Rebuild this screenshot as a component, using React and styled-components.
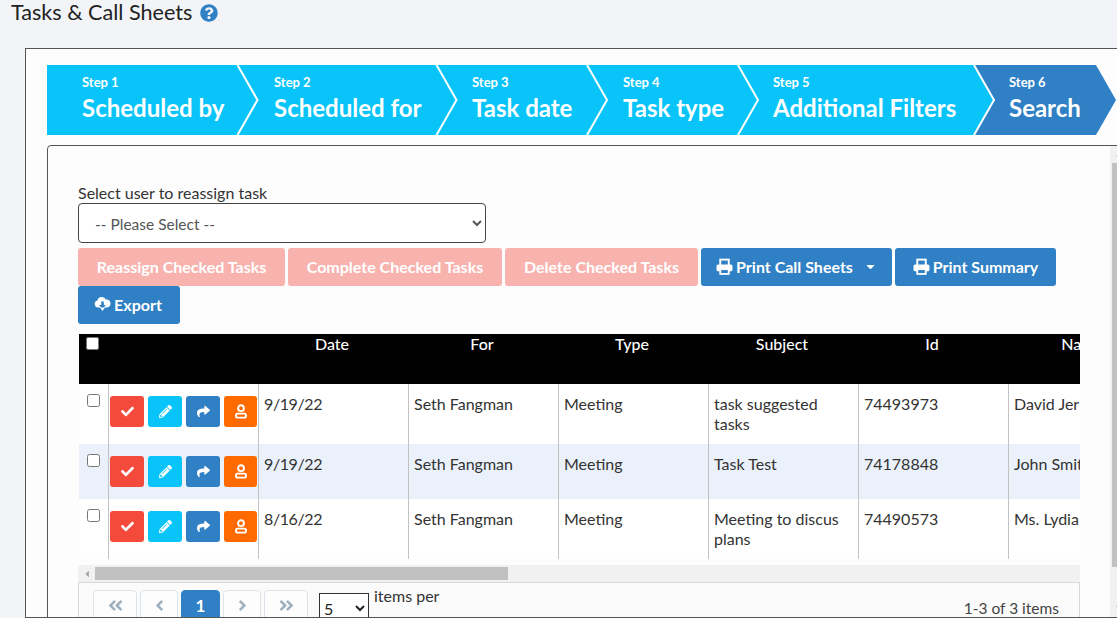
import React from "react";
import styled, { createGlobalStyle } from "styled-components";
import {
  FaCheck,
  FaPencilAlt,
  FaShare,
  FaQuestionCircle,
  FaAngleDoubleLeft,
  FaAngleDoubleRight,
  FaAngleLeft,
  FaAngleRight,
  FaCaretDown,
  FaCaretUp,
  FaCaretLeft,
} from "react-icons/fa";

const GlobalStyle = createGlobalStyle`
  * { box-sizing: border-box; }
  html, body { margin: 0; padding: 0; height: 618px; overflow: hidden; background: #f3f4f8; }
  body { font-family: Lato, "Open Sans", sans-serif; font-size: 16px; color: #333; }
`;

const Page = styled.div`
  width: 1117px;
  height: 618px;
  overflow: hidden;
  display: flex;
  flex-direction: column;
`;

const TitleBar = styled.h1`
  margin: 0;
  height: 48px;
  padding: 0 0 0 11px;
  display: flex;
  align-items: flex-start;
  gap: 8px;
  font-size: 21.6px;
  line-height: 25px;
  font-weight: 400;
  color: #222;
  svg {
    color: #2f80c4;
    font-size: 18px;
    margin-top: 4px;
  }
`;

const OuterBox = styled.div`
  flex: 0 0 570px;
  width: 1200px;
  margin-left: 25px;
  padding: 16px 0 0 21px;
  background: #fdfdfd;
  border: 1px solid #555;
  overflow: hidden;
`;

const Stepper = styled.div`
  display: flex;
  height: 70px;
  margin-bottom: 10px;
`;

const Step = styled.div`
  position: relative;
  flex: 0 0 ${(p) => p.$w}px;
  height: 70px;
  padding-left: ${(p) => p.$pad}px;
  color: #fff;
  z-index: ${(p) => p.$z};
`;

const StepShape = styled.svg`
  position: absolute;
  left: 0;
  top: 0;
  height: 70px;
`;

const StepNo = styled.div`
  position: relative;
  padding-top: 9px;
  font-size: 13px;
  line-height: 17px;
  font-weight: 700;
`;

const StepName = styled.div`
  position: relative;
  margin-top: 1px;
  font-size: 24px;
  line-height: 32px;
  font-weight: 700;
  white-space: nowrap;
`;

const Panel = styled.div`
  display: flex;
  width: 1080px;
  height: 480px;
  background: #fdfdfd;
  border: 1px solid #555;
  border-radius: 4px 0 0 0;
`;

const PanelBody = styled.div`
  flex: 0 0 1062px;
  padding: 37px 30px 0;
  overflow: hidden;
`;

const FieldLabel = styled.label`
  display: block;
  font-size: 16px;
  line-height: 20px;
  color: #333;
`;

const UserSelect = styled.select`
  display: block;
  width: 408px;
  height: 40px;
  padding: 2px 12px 0;
  font: 15.5px Lato, sans-serif;
  color: #555;
  background: #fff;
  border: 1px solid #444;
  border-radius: 4px;
`;

const Toolbar = styled.div`
  display: flex;
  flex-wrap: wrap;
  column-gap: 3px;
  margin-top: 5px;
`;

const ActionButton = styled.button`
  width: ${(p) => p.$w}px;
  height: 38px;
  padding: 0 0 2px;
  display: flex;
  align-items: center;
  justify-content: center;
  gap: 3px;
  font: 700 16px Lato, sans-serif;
  color: #fff;
  background: ${(p) => (p.$off ? "#f8b3af" : "#2f80c4")};
  border: none;
  border-radius: 3px;
`;

const ExportButton = styled(ActionButton)`
  padding-right: 2px;
`;

const Caret = styled(FaCaretDown)`
  margin-left: 8px;
  font-size: 13px;
`;

const TableWrap = styled.div`
  width: 1002px;
  margin-top: 10px;
  overflow: hidden;
`;

const Grid = styled.table`
  width: 1230px;
  table-layout: fixed;
  border-collapse: collapse;
  font-size: 16px;
`;

const HeadRow = styled.tr`
  height: 50px;
  background: #000;
`;

const HeadCell = styled.th`
  vertical-align: top;
  padding: 0 8px 0 5px;
  font-weight: 500;
  line-height: 20px;
  text-align: center;
  color: #fff;
`;

const Row = styled.tr`
  height: ${(p) => p.$h}px;
  background: ${(p) => (p.$alt ? "#eaf1fa" : "#fff")};
`;

const Cell = styled.td`
  vertical-align: top;
  padding: 10px 5px 0;
  line-height: 20px;
  color: #333;
  border-left: 1px solid #c2c2c2;
`;

const DateCell = styled(Cell)`
  letter-spacing: -0.4px;
`;

const CheckCell = styled(Cell)`
  padding: 10px 0 0 8px;
  border-left: 1px solid #fdfdfd;
`;

const ButtonCell = styled(Cell)`
  padding: 12px 0 0 1px;
`;

const Check = styled.input.attrs({ type: "checkbox" })`
  display: block;
  width: 13px;
  height: 13px;
  margin: 0;
`;

const HeadCheck = styled(Check)`
  margin: 3px 0 0 2px;
`;

const RowButtons = styled.div`
  display: flex;
  gap: 4px;
`;

const RowButton = styled.span`
  flex: 0 0 ${(p) => p.$w || 34}px;
  height: 31px;
  display: flex;
  align-items: center;
  justify-content: center;
  color: #fff;
  font-size: 13px;
  background: ${(p) => p.$bg};
  border-radius: 3px;
`;

const HScroll = styled.div`
  display: flex;
  align-items: center;
  width: 1002px;
  height: 17px;
  margin-top: 6px;
  background: #f1f1f1;
  color: #a3a3a3;
  font-size: 10px;
`;

const HArrow = styled.span`
  flex: 0 0 17px;
  display: flex;
  justify-content: center;
`;

const HThumb = styled.span`
  flex: 0 0 413px;
  height: 13px;
  background: #c1c1c1;
`;

const Pager = styled.div`
  display: flex;
  width: 1002px;
  height: 60px;
  padding: 7px 20px 0 14px;
  background: #fbfbfb;
  border: 1px solid #d8d8d8;
`;

const PageLinks = styled.div`
  display: flex;
  gap: 3px;
`;

const PageLink = styled.span`
  flex: 0 0 ${(p) => p.$w}px;
  height: 40px;
  display: flex;
  align-items: center;
  justify-content: center;
  padding-bottom: 10px;
  font-size: 17px;
  font-weight: 700;
  color: ${(p) => (p.$on ? "#fff" : "#9fb0bf")};
  background: ${(p) => (p.$on ? "#2f80c4" : "#fdfdfd")};
  border: 1px solid ${(p) => (p.$on ? "#2f80c4" : "#dde3ea")};
  border-radius: 4px;
`;

const PageSize = styled.select`
  width: 50px;
  height: 30px;
  margin: 3px 0 0 11px;
  padding: 0;
  font: 16px Lato, sans-serif;
  color: #222;
  background: #fff;
  border: 1px solid #333;
  border-radius: 0;
`;

const PerPage = styled.span`
  margin: -2px 0 0 5px;
  font-size: 16px;
  line-height: 15px;
  color: #333;
`;

const PageInfo = styled.span`
  margin-left: auto;
  margin-top: 9px;
  font-size: 15.5px;
  line-height: 18px;
  color: #444;
`;

const VScroll = styled.div`
  flex: 0 0 17px;
  display: flex;
  flex-direction: column;
  align-items: center;
  background: #f1f1f1;
  color: #a3a3a3;
  font-size: 10px;
`;

const VArrow = styled.span`
  flex: 0 0 17px;
  display: flex;
  align-items: center;
`;

const VThumb = styled.span`
  flex: 0 0 404px;
  width: 13px;
  background: #c1c1c1;
`;

const VSpacer = styled.span`
  flex: 0 0 31px;
`;

const steps = [
  { no: "Step 1", name: "Scheduled by", w: 190.5, pad: 35 },
  { no: "Step 2", name: "Scheduled for", w: 198.5, pad: 36.5 },
  { no: "Step 3", name: "Task date", w: 151, pad: 36 },
  { no: "Step 4", name: "Task type", w: 151, pad: 36 },
  { no: "Step 5", name: "Additional Filters", w: 236, pad: 35 },
  { no: "Step 6", name: "Search", w: 122, pad: 35, last: true },
];

const heads = ["Date", "For", "Type", "Subject", "Id", "Name"];

const rows = [
  { h: 60, date: "9/19/22", type: "Meeting", subject: "task suggested tasks", id: "74493973", name: "David Jer" },
  { h: 55, date: "9/19/22", type: "Meeting", subject: "Task Test", id: "74178848", name: "John Smith", alt: true },
  { h: 60, date: "8/16/22", type: "Meeting", subject: "Meeting to discus plans", id: "74490573", name: "Ms. Lydia" },
];

const StepBg = ({ w, last }) => {
  const shape = `M0 0H${w}L${w + 20} 35L${w} 70H0Z`;
  return (
    <StepShape width={w + 22} viewBox={`0 0 ${w + 22} 70`}>
      <path d={shape} fill={last ? "#2f80c4" : "#08c4f8"} />
      {!last && (
        <path d={`M${w} 0L${w + 20} 35L${w} 70`} fill="none" stroke="#fff" strokeWidth="2" />
      )}
    </StepShape>
  );
};

const PrintIcon = () => (
  <svg width="17" height="17" viewBox="0 0 16 16">
    <rect x="4" y="1.5" width="8" height="6" fill="none" stroke="#fff" strokeWidth="1.8" />
    <rect x="0.5" y="6" width="15" height="6.5" rx="1.5" fill="#fff" />
    <rect x="4" y="10.5" width="8" height="4.5" fill="#2f80c4" stroke="#fff" strokeWidth="1.7" />
  </svg>
);

const ExportIcon = () => (
  <svg width="17" height="16" viewBox="0 0 17 16">
    <path d="M4 11.5A3.5 3.5 0 0 1 3.4 4.6 4.6 4.6 0 0 1 12 3.6 3.9 3.9 0 0 1 13 11.5Z" fill="#fff" />
    <path d="M7.2 5.5H9.8V9H12L8.5 12.5 5 9H7.2Z" fill="#2f80c4" />
    <path d="M6 11.5H11L8.5 15Z" fill="#fff" />
  </svg>
);

const UserIcon = () => (
  <svg width="14" height="15" viewBox="0 0 14 15">
    <circle cx="7" cy="4.2" r="2.9" fill="none" stroke="#fff" strokeWidth="1.9" />
    <rect x="2" y="9.6" width="10" height="4" rx="1.6" fill="none" stroke="#fff" strokeWidth="1.9" />
  </svg>
);

const App = () => {
  return (
    <Page>
      <GlobalStyle />
      <TitleBar>
        Tasks &amp; Call Sheets <FaQuestionCircle />
      </TitleBar>
      <OuterBox>
        <Stepper>
          {steps.map((s, i) => (
            <Step key={s.no} $w={s.w} $pad={s.pad} $z={10 - i}>
              <StepBg w={s.w} last={s.last} />
              <StepNo>{s.no}</StepNo>
              <StepName>{s.name}</StepName>
            </Step>
          ))}
        </Stepper>
        <Panel>
          <PanelBody>
            <FieldLabel>Select user to reassign task</FieldLabel>
            <UserSelect defaultValue="">
              <option value="">-- Please Select --</option>
            </UserSelect>
            <Toolbar>
              <ActionButton $off $w={207}>Reassign Checked Tasks</ActionButton>
              <ActionButton $off $w={214}>Complete Checked Tasks</ActionButton>
              <ActionButton $off $w={193}>Delete Checked Tasks</ActionButton>
              <ActionButton $w={191}>
                <PrintIcon /> Print Call Sheets <Caret />
              </ActionButton>
              <ActionButton $w={161}>
                <PrintIcon /> Print Summary
              </ActionButton>
              <ExportButton $w={102}>
                <ExportIcon /> Export
              </ExportButton>
            </Toolbar>
            <TableWrap>
              <Grid>
                <colgroup>
                  <col width="30" />
                  <col width="150" />
                  <col width="150" />
                  <col width="150" />
                  <col width="150" />
                  <col width="150" />
                  <col width="150" />
                  <col width="150" />
                  <col width="150" />
                </colgroup>
                <thead>
                  <HeadRow>
                    <HeadCell>
                      <HeadCheck />
                    </HeadCell>
                    <HeadCell />
                    {heads.map((h) => (
                      <HeadCell key={h}>{h}</HeadCell>
                    ))}
                    <HeadCell />
                  </HeadRow>
                </thead>
                <tbody>
                  {rows.map((r) => (
                    <Row key={r.id} $h={r.h} $alt={r.alt}>
                      <CheckCell>
                        <Check />
                      </CheckCell>
                      <ButtonCell>
                        <RowButtons>
                          <RowButton $bg="#f44a3b"><FaCheck /></RowButton>
                          <RowButton $bg="#08c4f8"><FaPencilAlt /></RowButton>
                          <RowButton $bg="#2f80c4"><FaShare /></RowButton>
                          <RowButton $bg="#ff6a00" $w={33}><UserIcon /></RowButton>
                        </RowButtons>
                      </ButtonCell>
                      <DateCell>{r.date}</DateCell>
                      <Cell>Seth Fangman</Cell>
                      <Cell>{r.type}</Cell>
                      <Cell>{r.subject}</Cell>
                      <Cell>{r.id}</Cell>
                      <Cell>{r.name}</Cell>
                      <Cell />
                    </Row>
                  ))}
                </tbody>
              </Grid>
            </TableWrap>
            <HScroll>
              <HArrow><FaCaretLeft /></HArrow>
              <HThumb />
            </HScroll>
            <Pager>
              <PageLinks>
                <PageLink $w={44}><FaAngleDoubleLeft /></PageLink>
                <PageLink $w={38}><FaAngleLeft /></PageLink>
                <PageLink $w={39} $on>1</PageLink>
                <PageLink $w={38}><FaAngleRight /></PageLink>
                <PageLink $w={44}><FaAngleDoubleRight /></PageLink>
              </PageLinks>
              <PageSize defaultValue="5">
                <option>5</option>
              </PageSize>
              <PerPage>items per</PerPage>
              <PageInfo>1-3 of 3 items</PageInfo>
            </Pager>
          </PanelBody>
          <VScroll>
            <VArrow><FaCaretUp /></VArrow>
            <VThumb />
            <VSpacer />
            <VArrow><FaCaretDown /></VArrow>
          </VScroll>
        </Panel>
      </OuterBox>
    </Page>
  );
};

export default App;
